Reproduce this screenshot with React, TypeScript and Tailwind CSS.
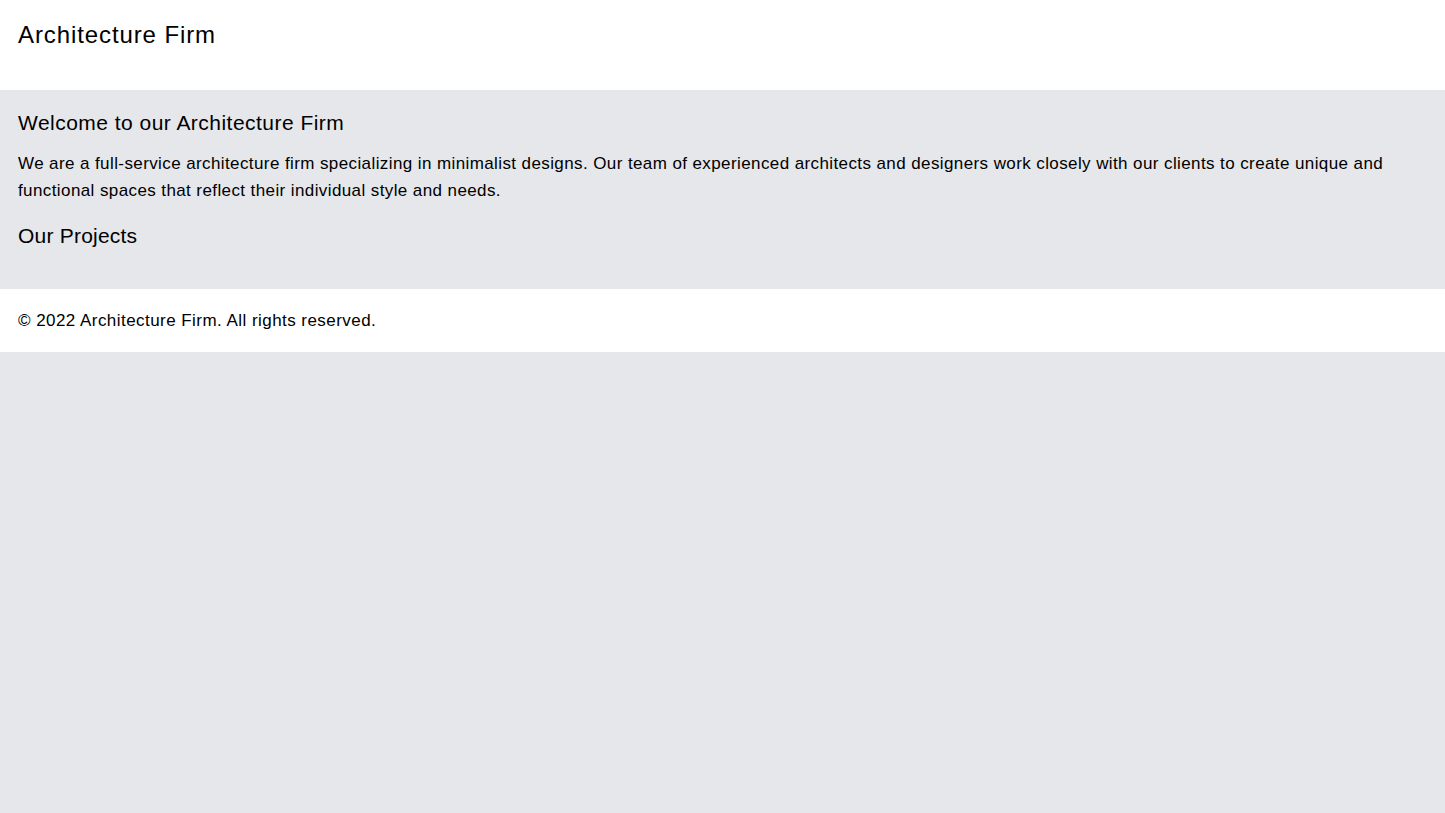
export default function App() {
  return (
    <div className="min-h-screen bg-gray-200 text-black font-['Liberation_Sans',Arial,sans-serif]">
      <header className="bg-white pl-[18px] pr-4 pt-[19px] pb-[39px]">
        <h1 className="text-2xl leading-8 tracking-[0.9px]">Architecture Firm</h1>
      </header>
      <main className="pl-[18px] pr-4 pt-[19px] pb-[39px]">
        <h2 className="text-[21px] leading-7 tracking-[0.47px] mb-[13px]">Welcome to our Architecture Firm</h2>
        <p className="text-[17px] leading-[27px] tracking-[0.4px] mb-[18px]">
          We are a full-service architecture firm specializing in minimalist designs. Our team of experienced architects and designers work closely with our clients to create unique and functional spaces that reflect their individual style and needs.
        </p>
        <h2 className="text-[21px] leading-7 tracking-[0.22px]">Our Projects</h2>
      </main>
      <footer className="bg-white pl-[18px] pr-4 pt-[18px] pb-[18px]">
        <p className="text-[17px] leading-[27px] tracking-[0.45px]">© 2022 Architecture Firm. All rights reserved.</p>
      </footer>
    </div>
  );
}
